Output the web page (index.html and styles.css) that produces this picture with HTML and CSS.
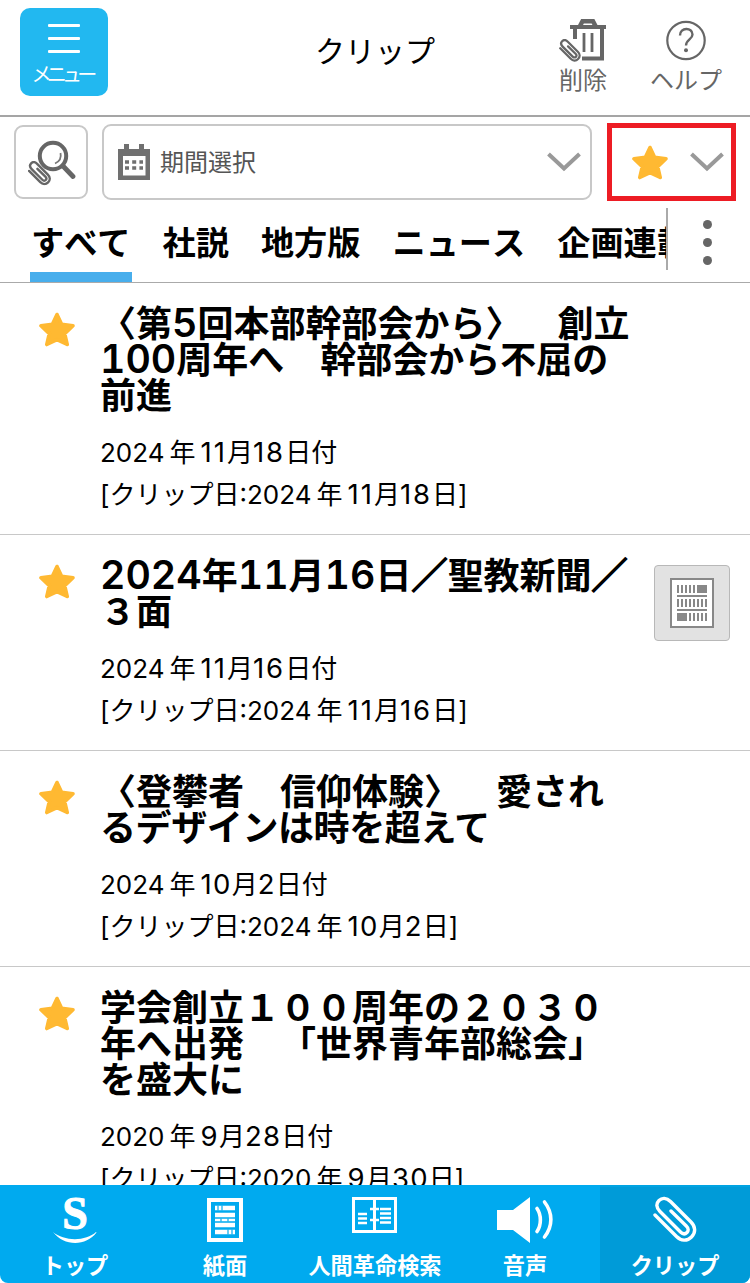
FILE: index.html
```html
<!DOCTYPE html>
<html lang="ja">
<head>
    <meta charset="UTF-8">
    <meta name="viewport" content="width=device-width, initial-scale=1.0">
    <title>クリップ</title>
    <link rel="stylesheet" href="styles.css">
</head>
<body>
    <!-- 共通アイコン -->
    <svg class="defs" width="0" height="0">
        <symbol id="star" viewBox="0 0 36 35">
            <path d="M18 2.5 L22.6 12.3 L34 13.8 L25.7 21.6 L28.2 32.5 L18 27.6 L7.8 32.5 L10.3 21.6 L2 13.8 L13.4 12.3 Z" fill="#ffb932" stroke="#ffb932" stroke-width="3.6" stroke-linejoin="round"/>
        </symbol>
        <symbol id="arrow" viewBox="0 0 34 20">
            <path d="M1.5 2 L17 16.5 L32.5 2" fill="none" stroke="#999" stroke-width="4"/>
        </symbol>
        <symbol id="clip" viewBox="0 0 44 47">
            <path d="M2 19 L23.5 40.5 C28 45 34 45.5 38.5 41 C43 36.5 42.5 30.5 38 26 L17.5 5.5 C13.5 1.5 9 1.5 6 4.5 C3 7.5 3 11.5 7 15.5 L27.5 36 C30 38.5 32.5 38 34 36.5 C35.5 35 35.8 32.5 33.3 30 L18 15" fill="none" stroke="currentColor" stroke-linecap="round" stroke-linejoin="round"/>
        </symbol>
    </svg>

    <header class="header">
        <button class="menu">
            <span class="menu-lines"><i></i><i></i><i></i></span>
            <span class="menu-text">メニュー</span>
        </button>
        <h1 class="page-title">クリップ</h1>
        <div class="tools">
            <div class="tool">
                <svg class="tool-icon" width="50" height="44" viewBox="0 0 50 44">
                    <path d="M12 9 H48" stroke="#666" stroke-width="4"/>
                    <path d="M22 8 L24.5 3.2 H35 L37.5 8" fill="none" stroke="#666" stroke-width="4.5"/>
                    <path d="M17 10 V21 M24 40.5 H44 V10" fill="none" stroke="#666" stroke-width="4"/>
                    <path d="M26 15 V34 M34 15 V34" stroke="#666" stroke-width="2.8"/>
                    <use href="#clip" x="1" y="21" width="22" height="23" stroke-width="4.6"/>
                </svg>
                <span>削除</span>
            </div>
            <div class="tool tool-help">
                <svg class="tool-icon" width="42" height="44" viewBox="0 0 42 44">
                    <circle cx="21" cy="22.5" r="18.7" fill="none" stroke="#666" stroke-width="2.2"/>
                    <path d="M15 17.5 C15 9 27.5 9 27.5 16.5 C27.5 21.5 21 21.5 21 27.5" fill="none" stroke="#666" stroke-width="2.4"/>
                    <circle cx="21" cy="32.3" r="2" fill="#666"/>
                </svg>
                <span>ヘルプ</span>
            </div>
        </div>
    </header>

    <div class="filters">
        <button class="search">
            <svg width="50" height="48" viewBox="0 0 50 48">
                <circle cx="27" cy="18" r="13.2" fill="none" stroke="#666" stroke-width="4"/>
                <path d="M34.5 15 C35.5 19.5 33.5 23.5 29 25.5" fill="none" stroke="#777" stroke-width="1.8"/>
                <path d="M37 28 L47 38.5" stroke="#666" stroke-width="4.8" stroke-linecap="round"/>
                <use href="#clip" x="2" y="23" width="23" height="24.5" stroke-width="4.6"/>
            </svg>
        </button>
        <div class="period">
            <svg width="32" height="36" viewBox="0 0 32 36">
                <path d="M0 5 H6 V0 H11 V5 H21 V0 H26 V5 H32 V36 H0 Z M5 12 V31.5 H27.5 V12 Z" fill="#707070" fill-rule="evenodd"/>
                <path d="M7 18 H25 M7 24 H25" stroke="#707070" stroke-width="3.6" stroke-dasharray="4 3.2"/>
            </svg>
            <span>期間選択</span>
            <svg class="arrow"><use href="#arrow"/></svg>
        </div>
        <div class="rate">
            <svg class="star"><use href="#star"/></svg>
            <svg class="arrow"><use href="#arrow"/></svg>
        </div>
    </div>

    <nav class="tabs">
        <div class="tab-list">
            <span class="tab active">すべて</span>
            <span class="tab">社説</span>
            <span class="tab">地方版</span>
            <span class="tab">ニュース</span>
            <span class="tab">企画連載</span>
        </div>
        <div class="more"><i></i><i></i><i></i></div>
    </nav>

    <main class="list">
        <article class="item">
            <svg class="star"><use href="#star"/></svg>
            <div class="item-body">
                <h2>〈第<i>5</i>回本部幹部会から〉　創立<br><i>100</i>周年へ　幹部会から不屈の<br>前進</h2>
                <p>2024<b>年</b><i class="wide">11</i>月<i class="wide">18</i>日付</p>
                <p>[クリップ日:2024<b>年</b><i class="wide">11</i>月<i class="wide">18</i>日]</p>
            </div>
        </article>
        <article class="item">
            <svg class="star"><use href="#star"/></svg>
            <div class="item-body">
                <h2><i>2024</i>年<i>11</i>月<i>16</i>日<b>／</b>聖教新聞<b>／</b><br>３面</h2>
                <p>2024<b>年</b><i class="wide">11</i>月<i class="wide">16</i>日付</p>
                <p>[クリップ日:2024<b>年</b><i class="wide">11</i>月<i class="wide">16</i>日]</p>
            </div>
            <div class="thumb">
                <svg width="44" height="50" viewBox="0 0 44 50">
                    <rect x="1" y="1" width="42" height="48" fill="#fff" stroke="#888" stroke-width="2"/>
                    <path d="M7 11 H27 M7 25 H38 M19 39 H38" stroke="#888" stroke-width="8" stroke-dasharray="2 2"/>
                    <path d="M27 7 H37 V15 H27 Z M7 35 H17 V43 H7 Z M7 17 H37 V19 H7 Z M7 31 H37 V33 H7 Z" fill="#888"/>
                </svg>
            </div>
        </article>
        <article class="item">
            <svg class="star"><use href="#star"/></svg>
            <div class="item-body">
                <h2>〈登攀者　信仰体験〉　愛され<br><span class="tight">るデザインは時を超えて</span></h2>
                <p>2024<b>年</b><i>10</i>月<i>2</i>日付</p>
                <p>[クリップ日:2024<b>年</b><i>10</i>月<i>2</i>日]</p>
            </div>
        </article>
        <article class="item">
            <svg class="star"><use href="#star"/></svg>
            <div class="item-body">
                <h2>学会創立１００周年の２０３０<br>年へ出発　「世界青年部総会」<br>を盛大に</h2>
                <p>2020<b>年</b><i>9</i>月<i>28</i>日付</p>
                <p>[クリップ日:2020<b>年</b><i>9</i>月<i>30</i>日]</p>
            </div>
        </article>
    </main>

    <footer class="bottom-nav">
        <div class="nav-item">
            <div class="nav-icon logo">
                <span>S</span>
                <svg width="44" height="12" viewBox="0 0 44 12"><path d="M0 1 C11 10.5 33 10.5 43 1 L43.5 1.5 C33 15.5 11 15.5 0 1 Z" fill="#fff"/></svg>
            </div>
            <span>トップ</span>
        </div>
        <div class="nav-item">
            <div class="nav-icon">
                <svg width="36" height="44" viewBox="0 0 36 44">
                    <rect x="2" y="2" width="32" height="40" fill="none" stroke="#fff" stroke-width="4"/>
                    <path d="M8 10 H28 M8 17 H28 M8 27 H28 M8 34 H28" stroke="#fff" stroke-width="4.5"/>
                    <path d="M8 22 H28" stroke="#fff" stroke-width="2.5"/>
                    <path d="M11 7.5 V12.5 M15 7.5 V12.5 M21 31.5 V36.5 M25 31.5 V36.5 M14 20.5 V23.5 M21 20.5 V23.5" stroke="#00aaef" stroke-width="1.2"/>
                </svg>
            </div>
            <span>紙面</span>
        </div>
        <div class="nav-item">
            <div class="nav-icon book">
                <svg width="45" height="36" viewBox="0 0 45 36">
                    <rect x="1.5" y="1.5" width="42" height="33" fill="none" stroke="#fff" stroke-width="3"/>
                    <path d="M22.5 2 V34" stroke="#fff" stroke-width="3"/>
                    <path d="M6 17 H15 M6 21.5 H15 M6 26 H15 M18 12 H27 M18 23 H27 M28 12 H39 M28 16.5 H39 M28 21 H39 M28 25.5 H39" stroke="#fff" stroke-width="2.3"/>
                </svg>
            </div>
            <span>人間革命検索</span>
        </div>
        <div class="nav-item">
            <div class="nav-icon">
                <svg width="56" height="46" viewBox="0 0 56 46">
                    <path d="M0 13 H16 L33 0 V46 L16 33 H0 Z" fill="#fff"/>
                    <path d="M40 11.5 C44.5 18 44.5 28 40 34.5 M47.5 5 C56 16 56 29 47.5 40" fill="none" stroke="#fff" stroke-width="3.6" stroke-linecap="round"/>
                </svg>
            </div>
            <span>音声</span>
        </div>
        <div class="nav-item current">
            <div class="nav-icon">
                <svg width="44" height="47" stroke-width="3.4"><use href="#clip"/></svg>
            </div>
            <span>クリップ</span>
        </div>
    </footer>
</body>
</html>
```
FILE: styles.css
```css
* {
    box-sizing: border-box;
}

body {
    margin: 0;
    height: 1283px;
    display: flex;
    flex-direction: column;
    overflow: hidden;
    background: #fff;
    color: #000;
    font-family: Inter, "Noto Sans CJK JP", sans-serif;
    text-spacing-trim: space-all;
}

svg {
    display: block;
    flex: none;
}

h1, h2, p {
    margin: 0;
}

button {
    padding: 0;
    border: none;
    font-family: inherit;
}

.defs {
    position: absolute;
}

/* ヘッダー */
.header {
    height: 117px;
    flex: none;
    display: grid;
    grid-template-columns: 1fr auto 1fr;
    align-items: start;
    padding: 8px 20px 0;
    border-bottom: 2px solid #a5a5a5;
}

.menu {
    width: 88px;
    height: 88px;
    display: flex;
    flex-direction: column;
    align-items: center;
    padding-top: 16px;
    border-radius: 10px;
    background: #22b8f0;
    color: #fff;
}

.menu-lines {
    display: grid;
    gap: 10px;
}

.menu-lines i {
    width: 32px;
    height: 3px;
    border-radius: 1px;
    background: #fff;
}

.menu-text {
    margin-top: 10px;
    font-size: 20px;
    line-height: 24px;
    letter-spacing: -4.7px;
    margin-left: -4px;
    white-space: nowrap;
}

.page-title {
    padding-top: 23px;
    font-size: 30px;
    line-height: 40px;
    font-weight: 400;
}

.tools {
    display: flex;
    justify-content: flex-end;
    padding-top: 10px;
    color: #666;
}

.tool {
    width: 60px;
    display: flex;
    flex-direction: column;
    align-items: center;
    font-size: 24px;
    line-height: 36px;
    white-space: nowrap;
}

.tool-help {
    width: 74px;
    margin-left: 36px;
    margin-right: 7px;
}

.tool-icon {
    margin-bottom: 1px;
}

/* 絞り込み */
.filters {
    height: 87px;
    flex: none;
    display: flex;
    align-items: flex-start;
    padding: 7px 14px 0;
}

.search {
    width: 74px;
    height: 74px;
    margin: 1px 14px 0 0;
    display: flex;
    align-items: center;
    justify-content: center;
    border: 2px solid #c8c8c8;
    border-radius: 9px;
    background: #fff;
    color: #666;
}

.period {
    width: 490px;
    height: 76px;
    display: flex;
    align-items: center;
    padding: 0 9px 0 14px;
    border: 2px solid #c8c8c8;
    border-radius: 9px;
    color: #555;
    font-size: 24px;
}

.period span {
    margin-left: 10px;
    padding-bottom: 4px;
    flex: 1;
}

.arrow {
    width: 34px;
    height: 20px;
}

.star {
    width: 36px;
    height: 35px;
}

.rate {
    width: 129px;
    height: 78px;
    margin: -1px 0 0 15px;
    display: flex;
    align-items: center;
    gap: 22px;
    padding-left: 20px;
    border: 5px solid #ed1c24;
}

/* タブ */
.tabs {
    height: 79px;
    flex: none;
    display: flex;
    border-bottom: 1px solid #aaa;
}

.tab-list {
    width: 666px;
    height: 78px;
    display: flex;
    gap: 30px;
    padding-left: 30px;
    overflow: hidden;
}

.tab {
    flex: none;
    padding: 15px 1px 0;
    font-size: 33.2px;
    line-height: 48px;
    font-weight: 700;
    font-kerning: none;
    white-space: nowrap;
}

.tab.active {
    border-bottom: 10px solid #48aeec;
}

.more {
    flex: 1;
    height: 62px;
    margin-top: 4px;
    display: flex;
    flex-direction: column;
    align-items: center;
    justify-content: center;
    gap: 9px;
    padding: 6px 3px 0 0;
    border-left: 2px solid #aaa;
}

.more i {
    width: 9px;
    height: 9px;
    border-radius: 50%;
    background: #666;
}

/* 記事一覧 */
.list {
    flex: 1;
    min-height: 0;
    overflow: hidden;
}

.item {
    display: flex;
    padding: 23px 20px 18px 39px;
    border-bottom: 1px solid #c8c8c8;
}

.item .star {
    margin-top: 6px;
}

.item-body {
    width: 553px;
    padding-left: 25px;
}

.item h2 {
    height: min-content;
    margin-bottom: 18px;
    font-size: 36px;
    line-height: 36px;
    font-weight: 700;
    white-space: nowrap;
}

.item h2 i {
    font-size: 39.3px;
    line-height: 0;
    font-style: normal;
    font-weight: 600;
    font-variant-numeric: tabular-nums;
}

.item h2 b {
    -webkit-text-stroke: 1.5px #000;
}

.item h2 .tight {
    letter-spacing: -0.4px;
}

.item p {
    font-size: 26px;
    line-height: 42px;
    white-space: nowrap;
}

.item p b {
    margin: 0 5px;
    font-weight: 400;
}

.item p i {
    font-size: 27.5px;
    line-height: 0;
    font-style: normal;
    letter-spacing: 1.3px;
}

.item p .wide {
    letter-spacing: 2px;
}

.thumb {
    width: 76px;
    height: 76px;
    margin: 7px 0 0 26px;
    flex: none;
    display: flex;
    align-items: center;
    justify-content: center;
    border: 1px solid #b8b8b8;
    border-radius: 4px;
    background: #e2e2e2;
}

/* 下部ナビ */
.bottom-nav {
    height: 98px;
    flex: none;
    display: grid;
    grid-template-columns: repeat(5, 1fr);
    border-radius: 0 0 8px 8px;
    overflow: hidden;
    background: #00aaef;
    color: #fff;
}

.nav-item {
    display: flex;
    flex-direction: column;
    align-items: center;
    padding-top: 11px;
    font-size: 22.2px;
    line-height: 28px;
    font-weight: 700;
    white-space: nowrap;
}

.nav-icon {
    height: 47px;
    margin-bottom: 9px;
    display: flex;
    align-items: center;
}

.nav-icon.book {
    padding: 0 1px 9px 0;
}

.nav-item.current {
    border-top: 2px solid #00a3e2;
    padding-top: 9px;
    background: #009bd8;
}

.logo {
    flex-direction: column;
    justify-content: flex-end;
}

.logo span {
    font-family: "Liberation Serif", serif;
    font-size: 46px;
    line-height: 34px;
    -webkit-text-stroke: 1px #fff;
}
```
